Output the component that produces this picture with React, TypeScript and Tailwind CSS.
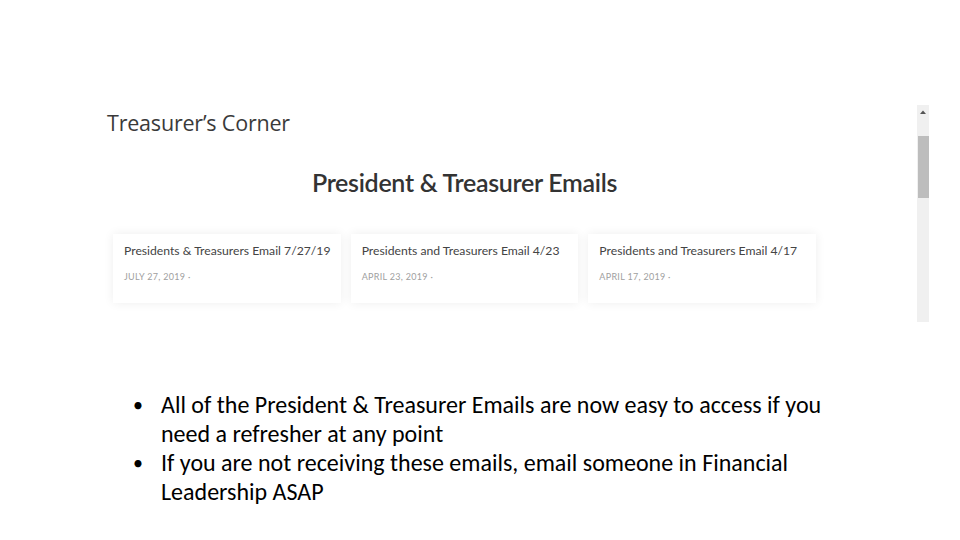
const emails = [
  { title: 'Presidents & Treasurers Email 7/27/19', date: 'July 27, 2019' },
  { title: 'Presidents and Treasurers Email 4/23', date: 'April 23, 2019' },
  { title: 'Presidents and Treasurers Email 4/17', date: 'April 17, 2019' },
]

const bullets = [
  'All of the President & Treasurer Emails are now easy to access if you need a refresher at any point',
  'If you are not receiving these emails, email someone in Financial Leadership ASAP',
]

export default function App() {
  return (
    <div className="w-[960px] h-[540px] bg-white overflow-hidden">
      {/* Screenshot panel */}
      <div className="ml-[100px] mt-[105px] w-[829px] h-[217px] flex">
        <div className="flex-1 pl-[7px] pt-[4px]">
          <h1 className="text-[21.5px] leading-[28px] text-[#3a3a3a] font-['Open_Sans',sans-serif] tracking-[-0.2px]">
            Treasurer’s Corner
          </h1>
          <div className="ml-[6px] w-[703px] mt-[30px]">
            <h2 className="text-center text-[25px] leading-[30px] font-semibold text-[#333] font-['Lato',sans-serif] tracking-[-0.3px]">
              President &amp; Treasurer Emails
            </h2>
            <div className="mt-[37px] grid grid-cols-3 gap-[10px]">
              {emails.map((email) => (
                <div
                  key={email.title}
                  className="h-[69px] bg-white shadow-[0_0_10px_rgba(0,0,0,0.07)] pl-[11px] pt-[8px]"
                >
                  <div className="whitespace-nowrap text-[12.2px] leading-[18px] text-[#444] font-['Lato',sans-serif]">
                    {email.title}
                  </div>
                  <div className="mt-[11px] text-[9px] leading-[12px] uppercase tracking-[0.3px] text-[#a0a0a0] font-['Lato',sans-serif]">
                    {email.date} ·
                  </div>
                </div>
              ))}
            </div>
          </div>
        </div>
        {/* Scrollbar */}
        <div className="w-[12px] bg-[#f0f0f0] flex flex-col items-center">
          <svg width="8" height="8" viewBox="0 0 8 8" className="mt-[3px]">
            <path d="M1 6 L4 2.5 L7 6 Z" fill="#555" />
          </svg>
          <div className="mt-[20px] w-[11px] h-[62px] bg-[#bdbdbd]" />
        </div>
      </div>

      {/* Bullet list */}
      <ul className="mt-[68px] ml-[133px] w-[700px] font-['Carlito','Liberation_Sans_Narrow','Noto_Sans',sans-serif] text-[24px] leading-[29px] text-black">
        {bullets.map((b) => (
          <li key={b} className="flex">
            <span className="w-[28px] shrink-0 text-[20px] leading-[31px]">•</span>
            <span>{b}</span>
          </li>
        ))}
      </ul>
    </div>
  )
}
